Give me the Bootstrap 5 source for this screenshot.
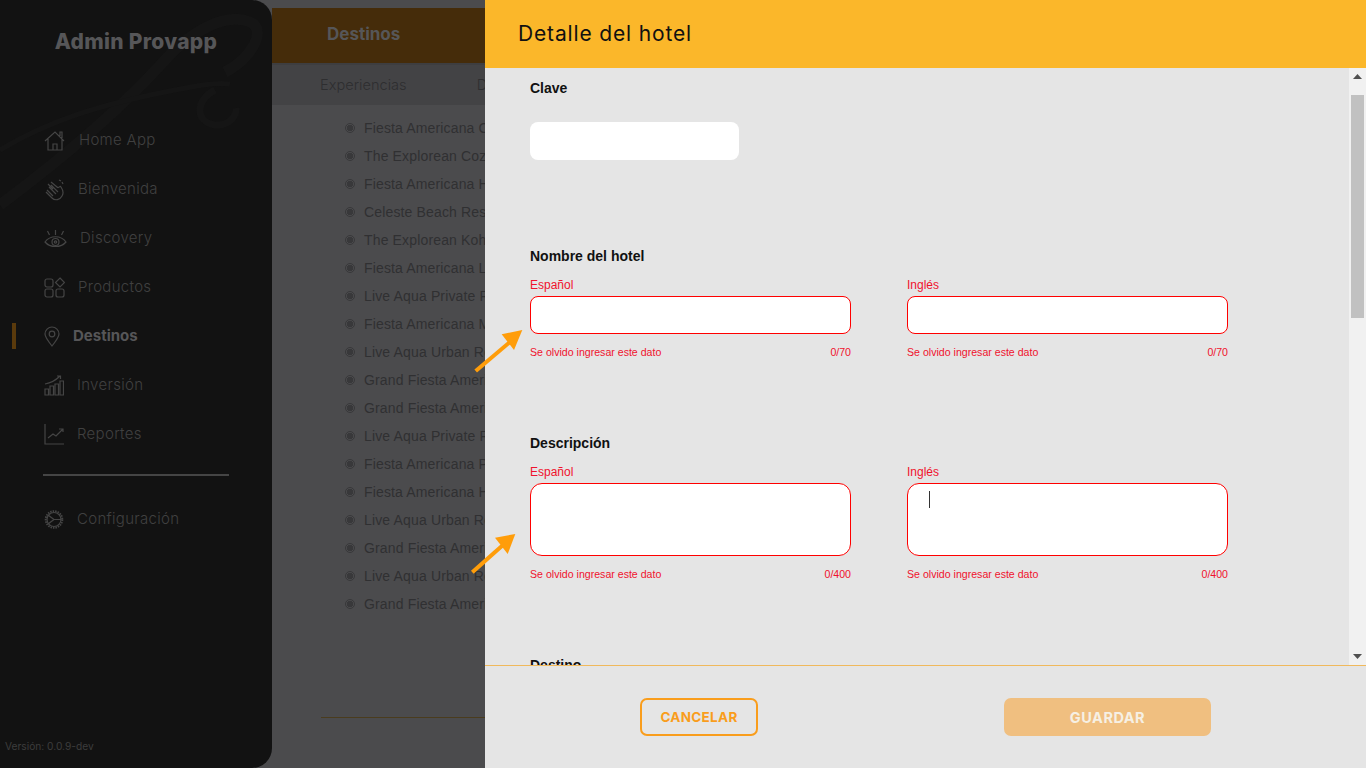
<!DOCTYPE html>
<html lang="es">

<head>
  <meta charset="UTF-8">
  <meta name="viewport" content="width=device-width, initial-scale=1.0">
  <title>Admin Provapp</title>
  <link href="https://cdn.jsdelivr.net/npm/bootstrap@5.3.0/dist/css/bootstrap.min.css" rel="stylesheet">
  <style>
    html, body { height: 100%; overflow: hidden; }
    body { background: #4b4b4d; font-family: "Liberation Sans", Arial, sans-serif; }
    .shell { height: 768px; }
    .wide-font { font-family: Inter, "Open Sans", sans-serif; }

    /* sidebar */
    .side { width: 272px; flex: none; background: #121212; border-radius: 0 20px 20px 0; position: relative; overflow: hidden; z-index: 1; }
    .side-mark { position: absolute; left: 0; top: 0; }
    .side-title { position: relative; height: 116px; padding-top: 29px; text-align: center; color: #565658; font-size: 21px; font-weight: 800; line-height: 26px; letter-spacing: .3px; }
    .side-nav { position: relative; padding-left: 44px; }
    .side-item { height: 49px; gap: 13px; color: #404040; font-size: 15px; font-weight: 300; letter-spacing: .3px; }
    .side-item svg { flex: none; fill: none; stroke: #454545; stroke-width: 1.2; }
    .side-item.on { color: #565658; font-weight: 700; position: relative; letter-spacing: 0; }
    .side-item.on::before { content: ""; position: absolute; left: -32px; top: 11px; width: 4px; height: 26px; background: #5a3a0c; }
    .side-rule { width: 186px; height: 2px; background: #454545; margin: 15px 0 19px -1px; }
    .side-ver { position: absolute; left: 5px; bottom: 15px; color: #3d3d3d; font-size: 10.2px; line-height: 14px; }

    /* page behind */
    .back { min-width: 0; }
    .back-head { margin-top: 8px; height: 55px; background: #452c0a; padding-left: 55px; color: #565658; font-size: 17px; font-weight: 700; line-height: 52px; }
    .back-tabs { height: 42px; background: #434345; border-top: 2px solid #3e3e40; padding-left: 48px; gap: 70px; color: #2e2e30; font-size: 14.6px; font-weight: 300; line-height: 40px; }
    .back-list { list-style: none; margin: 0; padding: 9px 0 0 73px; color: #303032; font-size: 14px; letter-spacing: .15px; }
    .back-list li { height: 28px; line-height: 28px; gap: 9px; white-space: nowrap; }
    .dot-mark { width: 10px; height: 10px; border-radius: 50%; border: 1px solid #38383a; background: radial-gradient(circle, #38383a 0 3px, transparent 3.2px); flex: none; }
    .back-rule { position: absolute; left: 321px; top: 717px; width: 170px; height: 1px; background: #4a3c1e; }

    /* drawer */
    .drawer { position: absolute; top: 0; right: 0; width: 881px; height: 768px; background: #e5e5e5; z-index: 2; }
    .drawer-head { height: 68px; flex: none; background: #fbb72a; padding-left: 33px; color: #111; font-size: 21px; line-height: 68px; letter-spacing: .85px; }
    .drawer-body { min-height: 0; overflow: hidden; }
    .form-area { padding: 12px 0 0 45px; }
    .lbl { font-size: 14px; font-weight: 700; color: #111; line-height: 16px; }
    .clave-box { width: 209px; height: 38px; background: #fff; border-radius: 8px; margin-top: 26px; margin-bottom: 88px; }
    .field-row { gap: 56px; margin-top: 14px; }
    .field { width: 321px; }
    .sub-lbl { font-size: 12px; line-height: 14px; color: #f0122d; margin-bottom: 4px; }
    .box { height: 38px; background: #fff; border: 1px solid #f00; border-radius: 8px; }
    .box-tall { height: 73px; border-radius: 12px; position: relative; }
    .caret-line { position: absolute; left: 21px; top: 7px; width: 1px; height: 17px; background: #333; }
    .hint { font-size: 10.6px; line-height: 12px; color: #f0122d; margin-top: 12px; }
    .field-gap { margin-top: 77px; }
    .field-gap-2 { margin-top: 77px; }

    .scroll-col { width: 17px; flex: none; background: #f1f1f1; }
    .scroll-btn { height: 17px; flex: none; }
    .scroll-track { min-height: 0; padding-top: 10px; padding-left: 2px; }
    .scroll-thumb { height: 223px; width: 13px; background: #c1c1c1; }

    .drawer-foot { height: 103px; flex: none; border-top: 1px solid #f0b95c; background: #e5e5e5; padding: 32px 155px 0; }
    .foot-btn { height: 38px; border-radius: 7px; padding: 0; font-weight: 700; line-height: 35px; }
    .foot-cancel { width: 118px; border: 2px solid #f99d1c; color: #f99d1c; background: transparent; font-size: 13.500px; letter-spacing: .3px; }
    .foot-save { width: 207px; border: 2px solid #f0bf80; color: #f6f0e4; background: #f0bf80; font-size: 14.500px; letter-spacing: .5px; }
    .foot-cancel:hover { color: #f99d1c; background: transparent; border-color: #f99d1c; }

    .arrow-mark { position: absolute; z-index: 3; pointer-events: none; }
    .arrow-one { left: 470px; top: 326px; }
    .arrow-two { left: 468px; top: 530px; }
  </style>
</head>

<body>
  <div class="shell d-flex position-relative">
    <aside class="side d-flex flex-column">
      <svg class="side-mark" width="272" height="230" viewBox="0 0 272 230" fill="none" stroke="#151515">
        <path d="M0 205C60 160 120 110 165 60C190 32 225 12 250 22C268 30 250 60 225 72" stroke-width="11"/>
        <path d="M0 150C50 120 100 105 165 92C195 86 215 82 230 84" stroke-width="5"/>
        <path d="M215 90C195 100 195 122 215 125C230 126 237 115 236 108" stroke-width="7"/>
      </svg>
      <div class="side-title wide-font">Admin Provapp</div>
      <nav class="side-nav wide-font">
        <div class="side-item d-flex align-items-center">
          <svg width="22" height="22" viewBox="0 0 22 22"><path d="M1 11 11 2l9 9M4 9v11h14V9M9 20v-6h4v6M16 6V2h2v6"/></svg>
          <span>Home App</span>
        </div>
        <div class="side-item d-flex align-items-center">
          <svg width="21" height="22" viewBox="0 0 21 22"><path d="M7 6l7 7M5 8l7 7M3 11l6 6M4 5l5 5M7 3l6 5c2 2 3-2 4 0 2 3 3 6 1 9-2 4-7 5-10 2L2 13M15 1l2 1M18 3l1 2"/></svg>
          <span>Bienvenida</span>
        </div>
        <div class="side-item d-flex align-items-center">
          <svg width="23" height="22" viewBox="0 0 23 22"><path d="M1 14c5-7 16-7 21 0-5 6-16 6-21 0Z"/><circle cx="11.500" cy="14" r="3.500"/><circle cx="11.500" cy="14" r="1.200"/><path d="M11.500 2v5M3.500 3l2 4M19.500 3l-2 4"/></svg>
          <span>Discovery</span>
        </div>
        <div class="side-item d-flex align-items-center">
          <svg width="21" height="21" viewBox="0 0 21 21"><rect x="1" y="2" width="8" height="8" rx="2"/><rect x="1" y="12" width="8" height="8" rx="2"/><rect x="12" y="12" width="8" height="8" rx="2"/><path d="M16 1l4.500 4.500L16 10l-4.500-4.500Z"/></svg>
          <span>Productos</span>
        </div>
        <div class="side-item on d-flex align-items-center">
          <svg width="16" height="21" viewBox="0 0 16 21"><path d="M8 20C4 15 1 11 1 8a7 7 0 0 1 14 0c0 3-3 7-7 12Z"/><circle cx="8" cy="8" r="2.800"/></svg>
          <span>Destinos</span>
        </div>
        <div class="side-item d-flex align-items-center">
          <svg width="20" height="21" viewBox="0 0 20 21"><path d="M1 14h3.500v6H1ZM6 11h3.500v9H6ZM11 9h3.500v11H11ZM16 6h3.500v14H16ZM1 9c6-1 11-4 15-8M13 1h3.500v3"/></svg>
          <span>Inversión</span>
        </div>
        <div class="side-item d-flex align-items-center">
          <svg width="20" height="21" viewBox="0 0 20 21"><path d="M1 0v20h19M4 14l5-4 3 2 7-7M15 5h4v3"/></svg>
          <span>Reportes</span>
        </div>
        <div class="side-rule"></div>
        <div class="side-item d-flex align-items-center">
          <svg width="20" height="21" viewBox="0 0 20 21"><circle cx="10" cy="10.500" r="8.300" stroke-width="2" stroke-dasharray="1.500 1"/><circle cx="10" cy="10.500" r="7"/><path d="M4 6l6 4.500L4 15M10 10.500h7"/></svg>
          <span>Configuración</span>
        </div>
      </nav>
      <div class="side-ver wide-font">Versión: 0.0.9-dev</div>
    </aside>

    <main class="back flex-grow-1">
      <div class="back-head wide-font">Destinos</div>
      <div class="back-tabs d-flex wide-font"><span>Experiencias</span><span>Datos</span></div>
      <ul class="back-list" id="hotelList"></ul>
      <div class="back-rule"></div>
    </main>

    <section class="drawer d-flex flex-column">
      <div class="drawer-head wide-font">Detalle del hotel</div>
      <div class="drawer-body d-flex flex-grow-1">
        <form class="form-area flex-grow-1">
          <div class="lbl">Clave</div>
          <div class="clave-box"></div>

          <div class="lbl">Nombre del hotel</div>
          <div class="field-row d-flex">
            <div class="field">
              <div class="sub-lbl">Español</div>
              <div class="box"></div>
              <div class="hint d-flex justify-content-between"><span>Se olvido ingresar este dato</span><span>0/70</span></div>
            </div>
            <div class="field">
              <div class="sub-lbl">Inglés</div>
              <div class="box"></div>
              <div class="hint d-flex justify-content-between"><span>Se olvido ingresar este dato</span><span>0/70</span></div>
            </div>
          </div>

          <div class="lbl field-gap">Descripción</div>
          <div class="field-row d-flex">
            <div class="field">
              <div class="sub-lbl">Español</div>
              <div class="box box-tall"></div>
              <div class="hint d-flex justify-content-between"><span>Se olvido ingresar este dato</span><span>0/400</span></div>
            </div>
            <div class="field">
              <div class="sub-lbl">Inglés</div>
              <div class="box box-tall"><div class="caret-line"></div></div>
              <div class="hint d-flex justify-content-between"><span>Se olvido ingresar este dato</span><span>0/400</span></div>
            </div>
          </div>

          <div class="lbl field-gap-2">Destino</div>
        </form>
        <div class="scroll-col d-flex flex-column">
          <div class="scroll-btn d-flex align-items-center justify-content-center">
            <svg width="9" height="5" viewBox="0 0 9 5"><path d="M4.500 0 9 5H0Z" fill="#505050"/></svg>
          </div>
          <div class="scroll-track flex-grow-1"><div class="scroll-thumb"></div></div>
          <div class="scroll-btn d-flex align-items-center justify-content-center">
            <svg width="9" height="5" viewBox="0 0 9 5"><path d="M4.500 5 9 0H0Z" fill="#505050"/></svg>
          </div>
        </div>
      </div>
      <div class="drawer-foot d-flex justify-content-between align-items-start">
        <button type="button" class="btn foot-btn foot-cancel wide-font">CANCELAR</button>
        <button type="button" class="btn foot-btn foot-save wide-font">GUARDAR</button>
      </div>
    </section>

    <svg class="arrow-mark arrow-one" width="56" height="48" viewBox="470 326 56 48">
      <path d="M475.700 371 510 342" stroke="#ff9d0a" stroke-width="4" fill="none"/>
      <path d="M522.300 330 501.700 334.300 514 350Z" fill="#ff9d0a"/>
    </svg>
    <svg class="arrow-mark arrow-two" width="50" height="46" viewBox="468 530 50 46">
      <path d="M472.300 572.300 503 545" stroke="#ff9d0a" stroke-width="4" fill="none"/>
      <path d="M515.300 534 495 537.700 507.700 554Z" fill="#ff9d0a"/>
    </svg>
  </div>

  <script src="https://cdn.jsdelivr.net/npm/bootstrap@5.3.0/dist/js/bootstrap.bundle.min.js"></script>
  <script>
    const hotels = [
      'Fiesta Americana Condesa', 'The Explorean Cozumel', 'Fiesta Americana Hacienda',
      'Celeste Beach Resort', 'The Explorean Kohunlich', 'Fiesta Americana Los Cabos',
      'Live Aqua Private Res', 'Fiesta Americana Mérida', 'Live Aqua Urban Resort',
      'Grand Fiesta Americana', 'Grand Fiesta Americana', 'Live Aqua Private Res',
      'Fiesta Americana Puerto', 'Fiesta Americana Hermosillo', 'Live Aqua Urban Resort',
      'Grand Fiesta Americana', 'Live Aqua Urban Resort', 'Grand Fiesta Americana'
    ];
    const hotelList = document.getElementById('hotelList');
    hotels.forEach(name => {
      const li = document.createElement('li');
      li.className = 'd-flex align-items-center';
      li.innerHTML = `<span class="dot-mark"></span><span>${name}</span>`;
      hotelList.appendChild(li);
    });
  </script>
</body>

</html>
